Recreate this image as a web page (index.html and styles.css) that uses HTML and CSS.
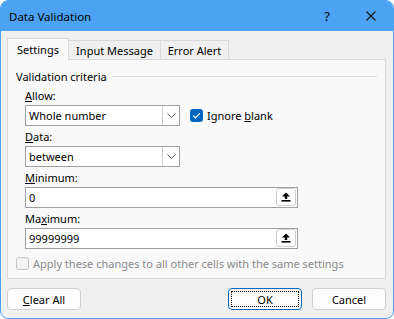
FILE: index.html
```html
<!DOCTYPE html>
<html>
<head>
<meta charset="utf-8">
<link rel="stylesheet" href="styles.css">
</head>
<body>
<div class="window">
  <header class="titlebar">
    <span class="title">Data Validation</span>
    <span class="cap-btn help">?</span>
    <span class="cap-btn close"><svg width="10" height="10" viewBox="0 0 10 10"><path d="M0.5 0.5L9.5 9.5M9.5 0.5L0.5 9.5" stroke="#111" stroke-width="1.1" fill="none"/></svg></span>
  </header>
  <div class="content">
    <div class="tabs">
      <div class="tab tab-settings active">Settings</div>
      <div class="tab tab-input">Input Message</div>
      <div class="tab tab-error">Error Alert</div>
    </div>
    <div class="panel">
      <div class="group-title"><span>Validation criteria</span><span class="rule"></span></div>
      <div class="criteria">
        <div class="label"><u>A</u>llow:</div>
        <div class="row">
          <div class="field select">
            <span class="value">Whole number</span>
            <span class="drop"><svg width="9" height="5" viewBox="0 0 9 5"><path d="M0.5 0.5L4.5 4.5L8.5 0.5" stroke="#555" stroke-width="1" fill="none"/></svg></span>
          </div>
          <div class="check">
            <span class="box checked"><svg width="13" height="13" viewBox="0 0 13 13"><path d="M3.2 6.6L5.4 8.8L9.8 4.4" stroke="#fff" stroke-width="1.2" fill="none"/></svg></span>
            <span>Ignore <u>b</u>lank</span>
          </div>
        </div>
        <div class="label"><u>D</u>ata:</div>
        <div class="field select">
          <span class="value">between</span>
          <span class="drop"><svg width="9" height="5" viewBox="0 0 9 5"><path d="M0.5 0.5L4.5 4.5L8.5 0.5" stroke="#555" stroke-width="1" fill="none"/></svg></span>
        </div>
        <div class="label"><u>M</u>inimum:</div>
        <div class="field input">
          <span class="value">0</span>
          <span class="ref-btn"><svg width="10" height="10" viewBox="0 0 10 10"><path d="M5 0.5L9 4.5H6.2V7H3.8V4.5H1Z" fill="#000"/><rect x="0.5" y="8" width="9" height="1.6" fill="#000"/></svg></span>
        </div>
        <div class="label">Ma<u>x</u>imum:</div>
        <div class="field input">
          <span class="value">99999999</span>
          <span class="ref-btn"><svg width="10" height="10" viewBox="0 0 10 10"><path d="M5 0.5L9 4.5H6.2V7H3.8V4.5H1Z" fill="#000"/><rect x="0.5" y="8" width="9" height="1.6" fill="#000"/></svg></span>
        </div>
      </div>
      <div class="apply">
        <span class="box disabled"></span>
        <span>Apply these changes to all other cells with the same settings</span>
      </div>
    </div>
    <div class="buttons">
      <button class="btn"><u>C</u>lear All</button>
      <span class="spacer"></span>
      <button class="btn default"><span class="focus">OK</span></button>
      <button class="btn">Cancel</button>
    </div>
  </div>
</div>
</body>
</html>
```
FILE: styles.css
```css
html, body {
  margin: 0;
  padding: 0;
  background: #ffffff;
}

.window {
  width: 394px;
  height: 319px;
  box-sizing: border-box;
  border: 1px solid #4ca3f3;
  border-radius: 8px;
  overflow: hidden;
  background: #f0f0f0;
  display: flex;
  flex-direction: column;
  font-family: "Noto Sans", "Open Sans", sans-serif;
  font-size: 11px;
  color: #000;
}

.titlebar {
  height: 30px;
  flex: none;
  background: #4ca3f3;
  display: flex;
  align-items: center;
}

.title {
  padding-left: 8px;
  font-size: 11.5px;
  flex: 1;
}

.cap-btn {
  width: 44px;
  height: 30px;
  display: flex;
  align-items: center;
  justify-content: center;
}

.help {
  font-size: 13px;
}

.content {
  flex: 1;
  display: flex;
  flex-direction: column;
  padding: 7px 7px 0 6px;
}

.tabs {
  display: flex;
  align-items: flex-end;
  height: 21px;
  position: relative;
  z-index: 1;
}

.tab {
  box-sizing: border-box;
  height: 19px;
  border: 1px solid #d9d9d9;
  border-bottom: none;
  background: #f0f0f0;
  display: flex;
  align-items: center;
  justify-content: center;
  margin-left: -1px;
}

.tab-settings { width: 62px; margin-left: 0; }
.tab-input { width: 93px; }
.tab-error { width: 69px; }

.tab.active {
  height: 22px;
  margin-bottom: -1px;
  background: #f9f9f9;
  position: relative;
  z-index: 2;
}

.panel {
  box-sizing: border-box;
  height: 220px;
  border: 1px solid #d9d9d9;
  background: #f9f9f9;
  padding: 8px 8px 0 8px;
}

.group-title {
  display: flex;
  align-items: center;
  height: 16px;
}

.rule {
  flex: 1;
  height: 1px;
  background: #dcdcdc;
  margin-left: 5px;
}

.criteria {
  margin: 4px 0 0 9px;
}

.label {
  height: 16px;
  line-height: 16px;
  margin-bottom: 1px;
}

.row {
  display: flex;
  align-items: center;
}

.field {
  box-sizing: border-box;
  height: 21px;
  border: 1px solid #a0a0a0;
  background: #fff;
  display: flex;
  align-items: center;
  margin-bottom: 3px;
}

.select { width: 155px; }
.input { width: 273px; }

.value {
  flex: 1;
  padding-left: 3px;
}

.drop {
  box-sizing: border-box;
  width: 17px;
  height: 19px;
  border-left: 1px solid #cfcfcf;
  display: flex;
  align-items: center;
  justify-content: center;
}

.ref-btn {
  box-sizing: border-box;
  width: 20px;
  height: 18px;
  margin-right: 1px;
  align-self: flex-start;
  border: 1px solid #cfcfcf;
  border-radius: 3px;
  background: #fff;
  display: flex;
  align-items: center;
  justify-content: center;
}

.check {
  display: flex;
  align-items: center;
  margin: -3px 0 0 10px;
}

.box {
  box-sizing: border-box;
  width: 13px;
  height: 13px;
  border-radius: 3px;
  margin-right: 4px;
  display: flex;
}

.box.checked {
  background: #0067c0;
}

.box.disabled {
  border: 1px solid #c5c5c5;
  background: #f3f3f3;
}

.apply {
  display: flex;
  align-items: center;
  margin-top: 7px;
  color: #8a8a8a;
}

.buttons {
  display: flex;
  align-items: center;
  gap: 10px;
  margin-top: 9px;
}

.spacer { flex: 1; }

.btn {
  box-sizing: border-box;
  width: 74px;
  height: 22px;
  padding: 0;
  border: 1px solid #d0d0d0;
  border-radius: 4px;
  background: #fdfdfd;
  font-family: inherit;
  font-size: 11px;
  color: #000;
  display: flex;
  align-items: center;
  justify-content: center;
}

.btn.default {
  border: 1px solid #0067c0;
  padding: 2px;
  align-items: stretch;
}

.focus {
  flex: 1;
  border: 1px dotted #000;
  display: flex;
  align-items: center;
  justify-content: center;
}
```
